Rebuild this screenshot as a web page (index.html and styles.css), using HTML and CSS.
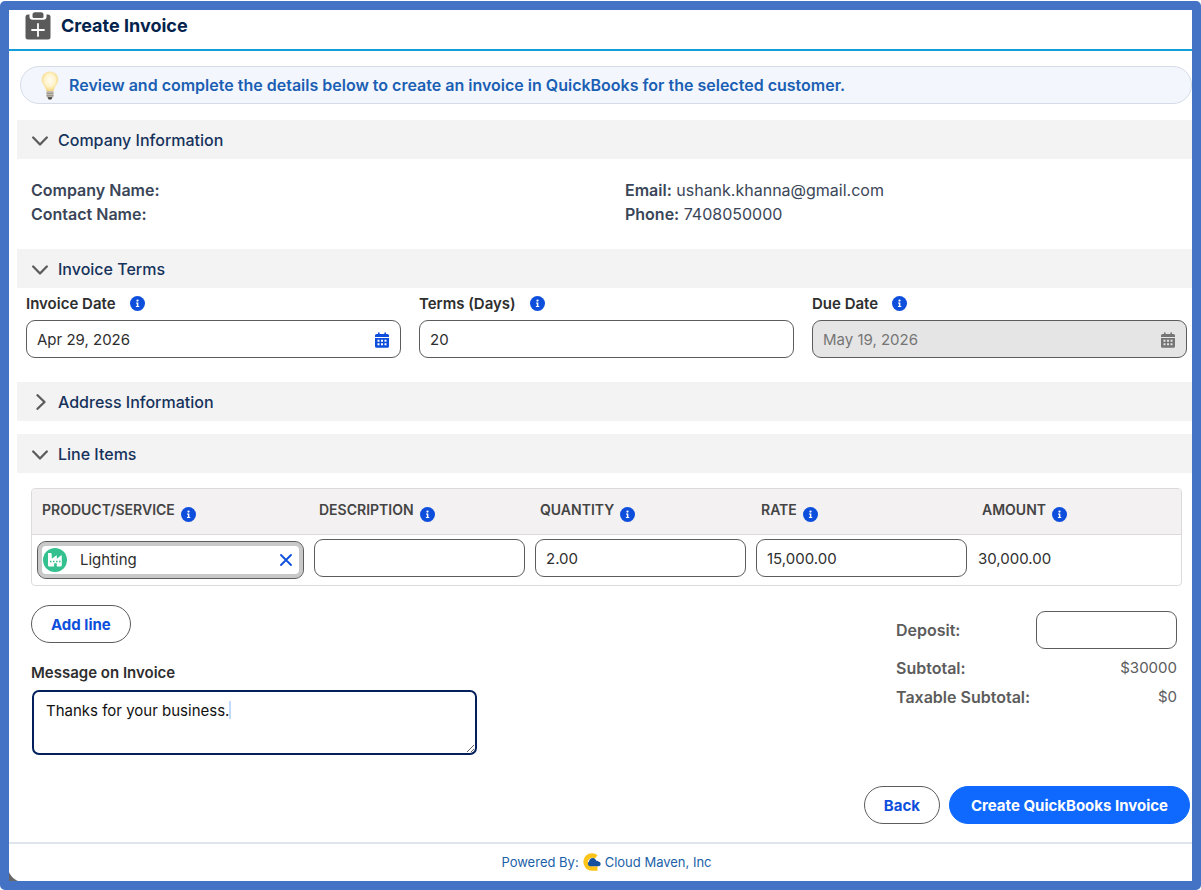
FILE: index.html
```html
<!DOCTYPE html>
<html lang="en">
	<head>
		<meta charset="UTF-8" />
		<title>Create Invoice</title>
		<meta name="viewport" content="width=device-width,initial-scale=1" />
		<link rel="stylesheet" href="styles.css">
	</head>
	<body>
		<svg class="sprite" aria-hidden="true">
			<symbol id="info" viewBox="0 0 16 16">
				<circle cx="8" cy="8" r="8" fill="#0d4fdc" />
				<circle cx="8" cy="4.9" r="1.2" fill="#fff" />
				<path d="M6.4 7h2.5v3.7h1v1.1H6.3v-1.1h1V8.100h-.9z" fill="#fff" />
			</symbol>
			<symbol id="chevron" viewBox="0 0 16 16">
				<path d="M1.200 5.500l6.800 7 6.800-7" fill="none" stroke="#5c5c5c" stroke-width="2.300" stroke-linecap="round" stroke-linejoin="round" />
			</symbol>
			<symbol id="calendar" viewBox="0 0 14 16">
				<path fill="currentColor" fill-rule="evenodd" d="M1.500 2H3V1q0-.8.8-.8t.8.8v1h4.800V1q0-.8.8-.8T11 1v1h1.500Q14 2 14 3.500V5H0V3.500Q0 2 1.500 2zM0 6h14v8.200q0 1.500-1.500 1.500h-11Q0 15.700 0 14.200zM2.500 7.800v2h2v-2zM6 7.800v2h2v-2zM9.500 7.800v2h2v-2zM2.500 11.300v2h2v-2zM6 11.300v2h2v-2zM9.500 11.300v2h2v-2z" />
			</symbol>
		</svg>
		<main class="frame">
			<header class="page-header">
				<svg class="page-icon" viewBox="0 0 26 28" aria-hidden="true">
					<path fill="#5a5a5a" d="M3 2.500h1.500v2.300q0 3 3 3h11q3 0 3-3V2.500H23q2.500 0 2.500 2.500v20q0 2.500-2.500 2.500H3Q.5 27.500.5 25V5Q.5 2.500 3 2.500z" />
					<path fill="#5a5a5a" d="M10 .3h6q2.500 0 2.500 2.500v1.700q0 1.500-1.500 1.500H9q-1.500 0-1.500-1.500V2.800Q7.500.3 10 .3z" />
					<path d="M13 12v12M7 18h12" stroke="#fff" stroke-width="1.800" stroke-linecap="round" />
				</svg>
				<h1>Create Invoice</h1>
			</header>
			<form class="content">
				<p class="notice">
					<svg class="bulb" viewBox="0 0 18 29" aria-hidden="true">
						<defs>
							<radialGradient id="glow" cx="50%" cy="45%" r="55%">
								<stop offset="0" stop-color="#fffdf4" />
								<stop offset=".6" stop-color="#fff3c8" />
								<stop offset="1" stop-color="#f4d47c" />
							</radialGradient>
						</defs>
						<path fill="url(#glow)" d="M9 .5c4.800 0 8.200 3.600 8.200 8.200 0 4.600-3.900 6.600-4.700 11.300h-7C4.700 15.300.8 13.300.8 8.700.8 4.100 4.200.5 9 .5z" />
						<path fill="#c3beb4" d="M5.500 20h7v5.500l-1.500 1.500H7l-1.500-1.500z" />
						<path fill="#938e84" d="M5.500 21.700h7v1h-7zM5.500 24.200h7v1h-7z" />
						<path fill="#45423c" d="M6.500 26.200h5L10.300 28.500H7.700z" />
					</svg>
					Review and complete the details below to create an invoice in QuickBooks for the selected customer.
				</p>

				<section class="section company">
					<h2><button type="button" class="section-title" aria-expanded="true"><svg class="chevron" aria-hidden="true"><use href="#chevron" /></svg>Company Information</button></h2>
					<div class="details">
						<div>
							<p><b>Company Name:</b></p>
							<p><b>Contact Name:</b></p>
						</div>
						<div>
							<p><b>Email:</b> ushank.khanna@gmail.com</p>
							<p><b>Phone:</b> 7408050000</p>
						</div>
					</div>
				</section>

				<section class="section terms">
					<h2><button type="button" class="section-title" aria-expanded="true"><svg class="chevron" aria-hidden="true"><use href="#chevron" /></svg>Invoice Terms</button></h2>
					<div class="fields">
						<div class="field">
							<div class="field-label">
								<label for="invoice-date">Invoice Date</label>
								<svg class="info" aria-hidden="true"><use href="#info" /></svg>
							</div>
							<div class="date">
								<input class="input" id="invoice-date" type="text" value="Apr 29, 2026" />
								<svg class="calendar" aria-hidden="true"><use href="#calendar" /></svg>
							</div>
						</div>
						<div class="field">
							<div class="field-label">
								<label for="terms">Terms (Days)</label>
								<svg class="info" aria-hidden="true"><use href="#info" /></svg>
							</div>
							<input class="input" id="terms" type="text" value="20" />
						</div>
						<div class="field">
							<div class="field-label">
								<label for="due-date">Due Date</label>
								<svg class="info" aria-hidden="true"><use href="#info" /></svg>
							</div>
							<div class="date disabled">
								<input class="input" id="due-date" type="text" value="May 19, 2026" disabled />
								<svg class="calendar" aria-hidden="true"><use href="#calendar" /></svg>
							</div>
						</div>
					</div>
				</section>

				<section class="section address">
					<h2><button type="button" class="section-title" aria-expanded="false"><svg class="chevron" aria-hidden="true"><use href="#chevron" /></svg>Address Information</button></h2>
				</section>

				<section class="section">
					<h2><button type="button" class="section-title" aria-expanded="true"><svg class="chevron" aria-hidden="true"><use href="#chevron" /></svg>Line Items</button></h2>
					<div class="table-wrap">
						<table class="lines">
							<colgroup>
								<col class="col-product" />
								<col class="col-field" />
								<col class="col-field" />
								<col class="col-field" />
								<col />
							</colgroup>
							<thead>
								<tr>
									<th scope="col"><span>PRODUCT/SERVICE</span><svg class="info" aria-hidden="true"><use href="#info" /></svg></th>
									<th scope="col"><span>DESCRIPTION</span><svg class="info" aria-hidden="true"><use href="#info" /></svg></th>
									<th scope="col"><span>QUANTITY</span><svg class="info" aria-hidden="true"><use href="#info" /></svg></th>
									<th scope="col"><span>RATE</span><svg class="info" aria-hidden="true"><use href="#info" /></svg></th>
									<th scope="col"><span>AMOUNT</span><svg class="info" aria-hidden="true"><use href="#info" /></svg></th>
								</tr>
							</thead>
							<tbody>
								<tr>
									<td class="product">
										<div class="lookup">
											<svg class="product-icon" viewBox="0 0 24 24" aria-hidden="true">
												<circle cx="12" cy="12" r="12" fill="#35c18f" />
												<path fill="#fff" d="M5.500 5h2.300q.7 0 .8.800l.3 5 4.300-3.300q.6-.4.600.4v2.800l4.200-3.200q.8-.5.8.4v9.300q0 1.300-1.300 1.300h-3.700v-2.700q0-.6-.6-.6h-1.500q-.6 0-.6.6v2.700H6.300q-1.300 0-1.300-1.300V5.500q0-.5.5-.5z" />
												<path fill="#35c18f" d="M7 12.800h1.500v1.400H7zM10 12.800h1.500v1.400H10zM13 12.800h1.500v1.400H13zM16 12.800h1.500v1.400H16z" />
											</svg>
											<input type="text" value="Lighting" aria-label="Product/Service" />
											<button type="button" class="clear" aria-label="Clear"><svg viewBox="0 0 12 12" aria-hidden="true"><path d="M1 1l10 10M11 1L1 11" stroke="#0d4fdc" stroke-width="1.800" stroke-linecap="round" /></svg></button>
										</div>
									</td>
									<td><input class="input" type="text" value="" aria-label="Description" /></td>
									<td><input class="input" type="text" value="2.00" aria-label="Quantity" /></td>
									<td><input class="input" type="text" value="15,000.00" aria-label="Rate" /></td>
									<td class="amount">30,000.00</td>
								</tr>
							</tbody>
						</table>
					</div>
				</section>

				<div class="summary">
					<div class="message">
						<button type="button" class="button">Add line</button>
						<label for="message">Message on Invoice</label>
						<textarea id="message">Thanks for your business.</textarea>
					</div>
					<div class="totals">
						<div class="deposit">
							<label for="deposit">Deposit:</label>
							<input class="input" id="deposit" type="text" value="" />
						</div>
						<div class="total"><b>Subtotal:</b><span>$30000</span></div>
						<div class="total"><b>Taxable Subtotal:</b><span>$0</span></div>
					</div>
				</div>

				<div class="actions">
					<button type="button" class="button">Back</button>
					<button type="submit" class="button primary">Create QuickBooks Invoice</button>
				</div>
			</form>
			<footer class="footer">
				<span>Powered By:</span>
				<svg class="maven" viewBox="0 0 18 18" aria-hidden="true">
					<path d="M13.200 3.900A6.500 6.500 0 1 0 9 15.500H14.500" fill="none" stroke="#fcc419" stroke-width="4.500" />
					<path fill="#14509f" d="M7.800 13.300a2.600 2.600 0 0 1-1.800-4.700 3.700 3.700 0 0 1 6.300-2.400q.8.500 1 1.500 1.500-.3 2.200.9 2.200.1 2.200 2.300 0 2.400-2.500 2.400z" />
				</svg>
				<a href="#">Cloud Maven, Inc</a>
			</footer>
		</main>
	</body>
</html>
```
FILE: styles.css
```css
*{
	box-sizing:border-box;
}
body{
	margin:0;
	background:#fff;
	color:#2e2e2e;
	font:15px/24px Inter,"Liberation Sans",sans-serif;
}
h1,h2,p{
	margin:0;
}
input,button,textarea{
	font:inherit;
	color:inherit;
}
b,label{
	font-weight:600;
}
.sprite{
	position:absolute;
	width:0;
	height:0;
}
.frame{
	display:flex;
	flex-direction:column;
	min-height:calc(100vh - 1px);
	margin-top:1px;
	border:9px solid #4472c4;
	border-radius:5px;
	overflow:hidden;
	background:
		radial-gradient(circle at 16px calc(100% - 16px),transparent 17px,#666 18px) 0 100%/11px 9px no-repeat,
		#fff;
}
.page-header{
	display:flex;
	align-items:center;
	gap:10px;
	height:41px;
	padding:0 16px 7px;
	border-bottom:2px solid #139ed9;
}
.page-icon{
	width:26px;
	height:28px;
}
h1{
	color:#03234d;
	font-size:18px;
	font-weight:700;
}
.content{
	flex:1;
	display:flex;
	flex-direction:column;
	padding:15px 0 0 8px;
}
.notice{
	display:flex;
	align-items:center;
	gap:10px;
	height:38px;
	margin:0 0 16px 3px;
	padding:0 20px;
	border:1px solid #d5dce8;
	border-radius:19px;
	background:#f3f7fd;
	color:#1b5fb4;
	font-size:16px;
	font-weight:600;
}
.bulb{
	width:18px;
	height:29px;
	flex:none;
}
h2{
	font-size:16px;
	font-weight:500;
}
.section-title{
	display:flex;
	align-items:center;
	gap:10px;
	width:100%;
	height:39px;
	padding:0 15px;
	border:0;
	background:#f3f3f3;
	color:#16325c;
	text-align:left;
}
.chevron{
	width:16px;
	height:16px;
}
.section-title[aria-expanded="false"] .chevron{
	transform:rotate(-90deg);
}
.details{
	display:grid;
	grid-template-columns:1fr 1fr;
	gap:27px;
	padding:19px 0 23px 14px;
	color:#3a4658;
	font-size:16px;
}
.fields{
	display:grid;
	grid-template-columns:repeat(3,1fr);
	gap:18px;
	padding:4px 5px 24px 9px;
}
.field-label{
	display:flex;
	align-items:center;
	gap:14px;
	height:24px;
	margin-bottom:4px;
	padding-bottom:1px;
}
.info{
	width:15px;
	height:15px;
	flex:none;
}
.input{
	display:block;
	width:100%;
	height:38px;
	padding:0 10px;
	border:1px solid #5c5c5c;
	border-radius:9px;
	background:#fff;
}
.input:disabled{
	background:#e5e5e5;
	color:#757575;
}
.date{
	display:grid;
	align-items:center;
}
.date>*{
	grid-area:1/1;
}
.calendar{
	justify-self:end;
	width:14px;
	height:16px;
	margin:2px 12px 0 0;
	color:#0d4fdc;
}
.disabled .calendar{
	color:#757575;
}
.address{
	margin-bottom:13px;
}
.table-wrap{
	margin:15px 10px 0 14px;
	border:1px solid #dddbda;
	border-radius:4px;
	overflow:hidden;
}
.lines{
	width:100%;
	border-collapse:collapse;
	table-layout:fixed;
}
.col-product{
	width:277px;
}
.col-field{
	width:221px;
}
.lines th{
	height:45px;
	padding:0 10px 3px;
	border-bottom:1px solid #dddbda;
	background:#f3f1f2;
	color:#444;
	font-size:14px;
	font-weight:600;
	text-align:left;
	white-space:nowrap;
}
.lines th .info{
	margin:9px 0 0 6px;
	vertical-align:middle;
}
.lines th span{
	vertical-align:middle;
}
.lines td{
	height:51px;
	padding:0 5px 3px;
}
.lines td.product{
	padding-bottom:0;
}
.lines td.amount{
	padding:0 6px 1px;
}
.lookup{
	display:flex;
	align-items:center;
	gap:13px;
	height:38px;
	padding:0 11px 0 5px;
	border:1px solid #5c5c5c;
	border-radius:9px;
	box-shadow:inset 0 0 0 4px #c9c9c9;
}
.lookup input{
	flex:1;
	min-width:0;
	padding:0;
	border:0;
	background:none;
}
.product-icon{
	width:24px;
	height:24px;
	flex:none;
}
.clear{
	width:12px;
	height:12px;
	padding:0;
	border:0;
	background:none;
}
.clear svg{
	display:block;
}
.summary{
	display:flex;
	justify-content:space-between;
	padding:19px 15px 0 14px;
}
.message{
	display:flex;
	flex-direction:column;
	align-items:flex-start;
	width:446px;
}
.message label{
	margin:18px 0 5px;
}
.button{
	height:38px;
	padding:1px 19px 0;
	border:1px solid #5c5c5c;
	border-radius:19px;
	background:#fff;
	color:#0d4fdc;
	font-weight:700;
}
.primary{
	padding:1px 21px 0;
	border-color:#0f69ff;
	background:#0f69ff;
	color:#fff;
}
textarea{
	align-self:stretch;
	height:65px;
	margin-left:1px;
	padding:7px 12px;
	border:2px solid #03205c;
	border-radius:7px;
	outline:0;
	/* selected line end */
	background:linear-gradient(#c2dbfd,#c2dbfd) 195px 9px/2px 18px no-repeat #fff;
	color:#111;
}
.totals{
	width:281px;
	padding-top:6px;
	color:#5c5c5c;
}
.totals b,.totals label{
	font-size:16px;
}
.deposit,.total{
	display:flex;
	align-items:center;
	justify-content:space-between;
}
.deposit{
	margin-bottom:7px;
}
.deposit .input{
	width:141px;
}
.total{
	margin-bottom:5px;
}
.actions{
	display:flex;
	justify-content:flex-end;
	gap:9px;
	padding:31px 2px 18px 0;
}
.footer{
	display:flex;
	align-items:center;
	justify-content:center;
	gap:4px;
	height:39px;
	padding:0 0 1px 12px;
	border-top:2px solid #dfe5ea;
	color:#1b5fa8;
	font-size:13px;
}
.footer a{
	color:inherit;
	text-decoration:none;
}
.maven{
	width:18px;
	height:18px;
}
```
